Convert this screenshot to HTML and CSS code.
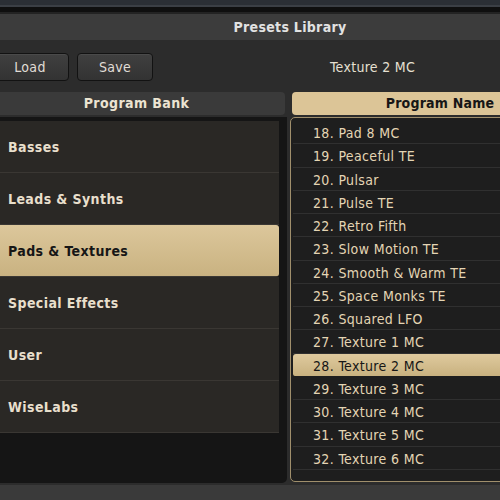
FILE: index.html
```html
<!DOCTYPE html>
<html lang="en">
    <head>
        <meta charset="UTF-8" />
        <meta name="viewport" content="width=device-width, initial-scale=1.0" />
        <title>Presets Library</title>
        <link rel="stylesheet" href="styles.css">
    </head>
    <body>
        <div class="window">
            <div class="topstrip"></div>
            <div class="app">
                <div class="titlebar">Presets Library</div>

                <div class="toolbar">
                    <button class="btn btn-load">Load</button>
                    <button class="btn btn-save">Save</button>
                    <span class="current">Texture 2 MC</span>
                </div>

                <div class="columns">
                    <div class="col col-bank">
                        <div class="head head-bank">Program Bank</div>
                        <div class="bank-panel">
                            <ul class="bank-list">
                                <li class="bank">Basses</li>
                                <li class="bank">Leads &amp; Synths</li>
                                <li class="bank selected">Pads &amp; Textures</li>
                                <li class="bank">Special Effects</li>
                                <li class="bank">User</li>
                                <li class="bank">WiseLabs</li>
                            </ul>
                        </div>
                    </div>

                    <div class="col col-names">
                        <div class="head head-names">Program Name</div>
                        <ul class="name-list">
                            <li class="name">18. Pad 8 MC</li>
                            <li class="name">19. Peaceful TE</li>
                            <li class="name">20. Pulsar</li>
                            <li class="name">21. Pulse TE</li>
                            <li class="name">22. Retro Fifth</li>
                            <li class="name">23. Slow Motion TE</li>
                            <li class="name">24. Smooth &amp; Warm TE</li>
                            <li class="name">25. Space Monks TE</li>
                            <li class="name">26. Squared LFO</li>
                            <li class="name">27. Texture 1 MC</li>
                            <li class="name selected">28. Texture 2 MC</li>
                            <li class="name">29. Texture 3 MC</li>
                            <li class="name">30. Texture 4 MC</li>
                            <li class="name">31. Texture 5 MC</li>
                            <li class="name">32. Texture 6 MC</li>
                        </ul>
                    </div>
                </div>
            </div>
            <div class="statusbar"></div>
        </div>
    </body>
</html>
```

FILE: styles.css
```css
html, body {
    margin: 0;
    height: 500px;
    overflow: hidden;
}
body {
    background: #2c2c2c;
    font-family: "DejaVu Sans Condensed", "DejaVu Sans", sans-serif;
    font-size: 14px;
}
.window {
    width: 500px;
    height: 500px;
    overflow: hidden;
    display: flex;
    flex-direction: column;
}
.topstrip {
    flex: none;
    height: 14px;
    background: linear-gradient(#2b2f35 0, #2b2f35 5px, #3b3f45 5px, #3b3f45 7px, #0f0f0f 7px, #0f0f0f 12px, #232323 12px);
}
.app {
    flex: none;
    width: 604px;
    margin-left: -12px;
}
.titlebar {
    height: 26px;
    line-height: 26px;
    background: #3c3c3c;
    color: #e2e2e2;
    font-weight: bold;
    letter-spacing: 0.3px;
    text-align: center;
}
.toolbar {
    height: 52px;
    box-sizing: border-box;
    padding: 13px 0 0 3px;
    display: flex;
    align-items: flex-start;
    gap: 8px;
}
.btn {
    height: 28px;
    border: 1px solid #121212;
    border-radius: 4px;
    background: linear-gradient(#404040, #333333);
    box-shadow: inset 0 1px 0 #4a4a4a;
    color: #e0ddd6;
    font-family: inherit;
    font-size: 14px;
    letter-spacing: 0.3px;
    padding: 0;
}
.btn-load {
    width: 78px;
}
.btn-save {
    width: 76px;
}
.current {
    margin-left: 169px;
    line-height: 28px;
    letter-spacing: 0.3px;
    color: #e6e0d2;
}
.columns {
    display: grid;
    grid-template-columns: 299px 298px;
    column-gap: 3px;
}
.head {
    height: 23px;
    line-height: 23px;
    border-radius: 4px;
    font-weight: bold;
    letter-spacing: 0.4px;
    text-align: center;
    margin-bottom: 2px;
}
.head-bank {
    margin-right: 2px;
    background: #3a3a3a;
    color: #ece4d2;
}
.head-names {
    margin-left: 2px;
    background: #dcc597;
    color: #161616;
    letter-spacing: 0.2px;
}
.bank-panel {
    height: 366px;
    background: #151515;
    border-radius: 0 0 5px 0;
    padding: 4px 8px 0 0;
    box-sizing: border-box;
}
.bank-list, .name-list {
    list-style: none;
    margin: 0;
}
.bank-list {
    padding: 0;
}
.bank {
    height: 51px;
    line-height: 53px;
    padding-left: 20px;
    background: #2a2825;
    border-bottom: 1px solid #3a3733;
    color: #e8dfcc;
    font-weight: bold;
    letter-spacing: 0.4px;
}
.bank.selected {
    background: linear-gradient(#dcc79b, #c9b281);
    border-radius: 3px;
    color: #161616;
}
.name-list {
    margin-top: 1px;
    height: 365px;
    box-sizing: border-box;
    padding: 3px 0 0;
    background: #1e1e1e;
    border: 1px solid #a08f6c;
    border-radius: 5px;
}
.name {
    height: 23.25px;
    line-height: 24px;
    box-sizing: border-box;
    margin: 0 0 0 2px;
    padding-left: 20px;
    border-bottom: 1px solid #303030;
    color: #e4d5b4;
    letter-spacing: 0.35px;
}
.name.selected {
    background: linear-gradient(#dfca9e, #c8b17f);
    border-radius: 3px;
    border-bottom-color: #1e1e1e;
    color: #161616;
}
.statusbar {
    flex: none;
    margin-top: auto;
    height: 15px;
    background: #3a3a3a;
}
```
